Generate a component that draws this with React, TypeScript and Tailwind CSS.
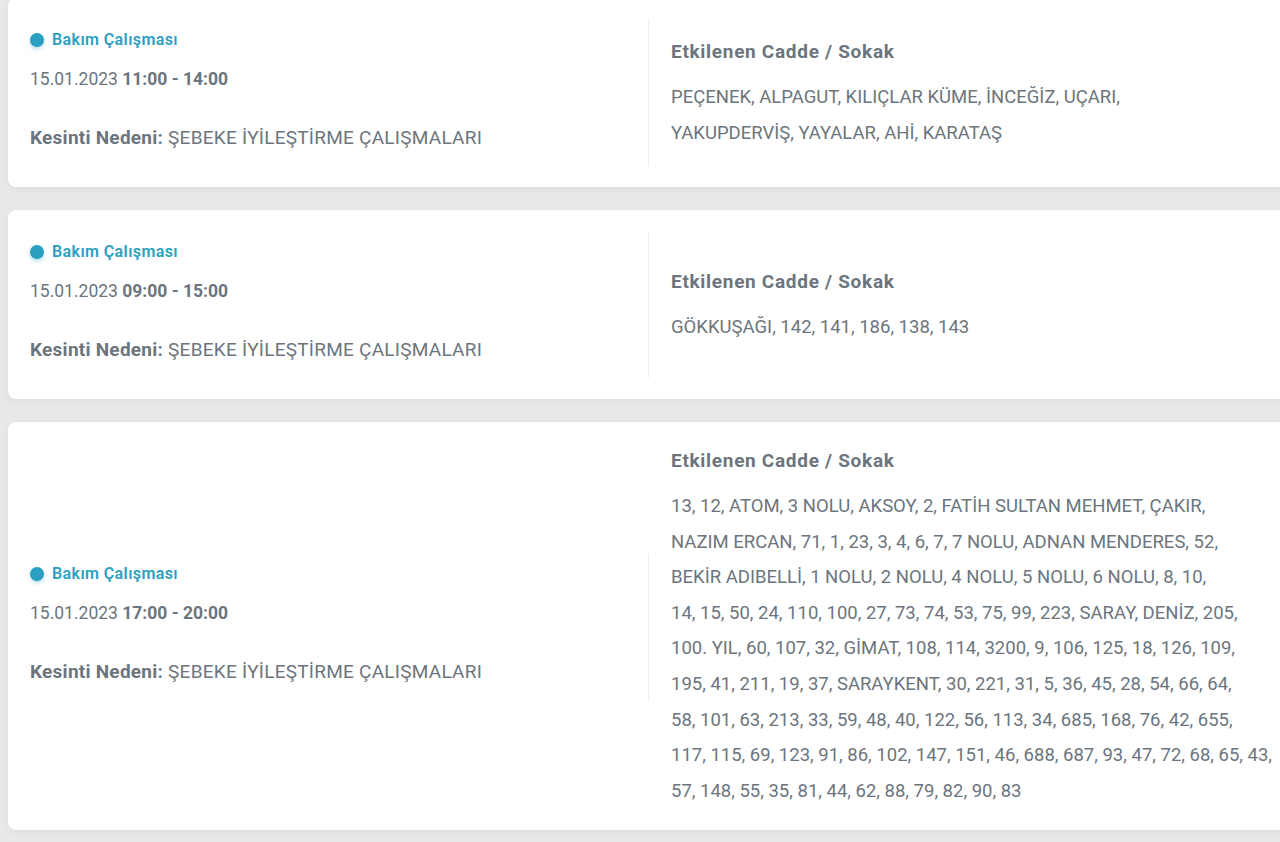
import React from "react";

type Item = { date: string; time: string; lines: string[] };

const items: Item[] = [
  {
    date: "15.01.2023",
    time: "11:00 - 14:00",
    lines: [
      "PEÇENEK, ALPAGUT, KILIÇLAR KÜME, İNCEĞİZ, UÇARI,",
      "YAKUPDERVİŞ, YAYALAR, AHİ, KARATAŞ",
    ],
  },
  {
    date: "15.01.2023",
    time: "09:00 - 15:00",
    lines: ["GÖKKUŞAĞI, 142, 141, 186, 138, 143"],
  },
  {
    date: "15.01.2023",
    time: "17:00 - 20:00",
    lines: [
      "13, 12, ATOM, 3 NOLU, AKSOY, 2, FATİH SULTAN MEHMET, ÇAKIR,",
      "NAZIM ERCAN, 71, 1, 23, 3, 4, 6, 7, 7 NOLU, ADNAN MENDERES, 52,",
      "BEKİR ADIBELLİ, 1 NOLU, 2 NOLU, 4 NOLU, 5 NOLU, 6 NOLU, 8, 10,",
      "14, 15, 50, 24, 110, 100, 27, 73, 74, 53, 75, 99, 223, SARAY, DENİZ, 205,",
      "100. YIL, 60, 107, 32, GİMAT, 108, 114, 3200, 9, 106, 125, 18, 126, 109,",
      "195, 41, 211, 19, 37, SARAYKENT, 30, 221, 31, 5, 36, 45, 28, 54, 66, 64,",
      "58, 101, 63, 213, 33, 59, 48, 40, 122, 56, 113, 34, 685, 168, 76, 42, 655,",
      "117, 115, 69, 123, 91, 86, 102, 147, 151, 46, 688, 687, 93, 47, 72, 68, 65, 43,",
      "57, 148, 55, 35, 81, 44, 62, 88, 79, 82, 90, 83",
    ],
  },
];

function Card({ item }: { item: Item }) {
  return (
    <div className="flex w-[1300px] items-center rounded-lg bg-white pb-[21px] pt-[22px] shadow-[0_2px_6px_rgba(0,0,0,0.05)]">
      <div className="w-[640px] shrink-0 pb-[5px] pl-[22px] text-[#6c757d]">
        <div className="flex h-[20px] items-center gap-[8px]">
          <span className="h-[14px] w-[14px] shrink-0 rounded-full bg-[#2a9fc0] shadow-[0_2px_4px_rgba(42,159,192,0.35)]" />
          <span className="text-[16px] font-semibold leading-[20px] tracking-[0.4px] text-[#2a9fc0]">
            Bakım Çalışması
          </span>
        </div>
        <div className="mt-[16px] text-[17.5px] leading-[26px]">
          {item.date} <span className="font-bold">{item.time}</span>
        </div>
        <div className="mt-[33px] text-[19px] leading-[26px] tracking-[0.25px]">
          <span className="font-bold">Kesinti Nedeni:</span> ŞEBEKE İYİLEŞTİRME ÇALIŞMALARI
        </div>
      </div>
      <div className="h-[146px] w-px shrink-0 bg-[#eeeeee]" />
      <div className="flex-1 pl-[22px] pt-[5px] text-[#6c757d]">
        <div className="text-[19px] font-bold leading-[24px] tracking-[0.7px]">Etkilenen Cadde / Sokak</div>
        <div className="mt-[16px] text-[18.5px] leading-[35.6px]">
          {item.lines.map((l, i) => (
            <div key={i} className="whitespace-nowrap">
              {l}
            </div>
          ))}
        </div>
      </div>
    </div>
  );
}

export default function App() {
  return (
    <div
      className="h-[842px] w-[1280px] overflow-hidden bg-[#e6e8ea] pl-[8px]"
      style={{ fontFamily: "Roboto, 'Noto Sans', sans-serif" }}
    >
      <div className="-mt-[2px] flex flex-col gap-[23px]">
        {items.map((it, i) => (
          <Card key={i} item={it} />
        ))}
      </div>
    </div>
  );
}
